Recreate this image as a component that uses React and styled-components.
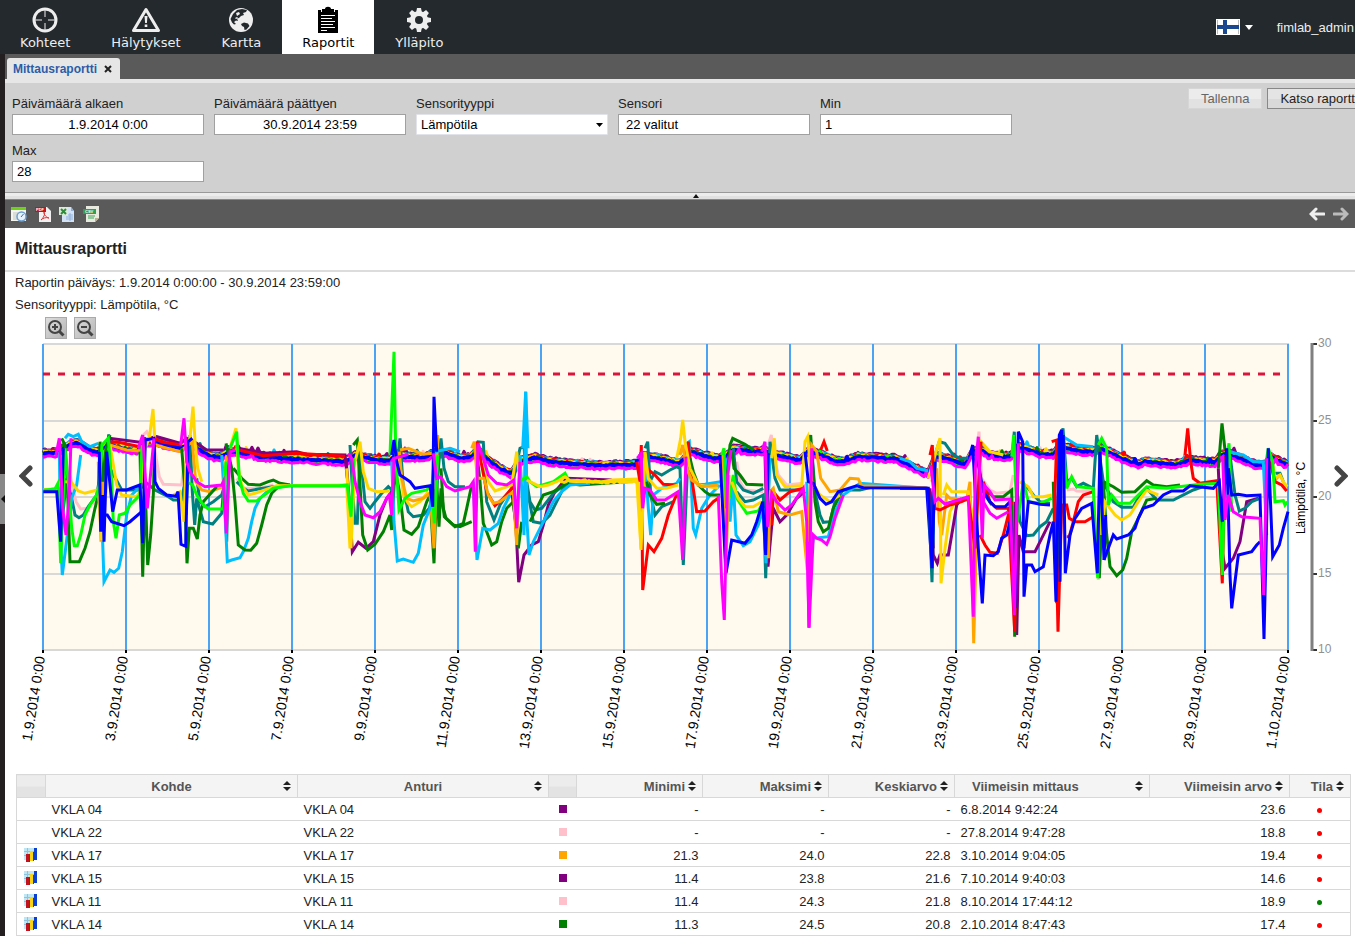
import React, { useState } from 'react';
import styled, { createGlobalStyle } from 'styled-components';

const COLORS = {
  purple: '#800080',
  pink: '#ffc0cb',
  orange: '#ffa500',
  red: '#ff0000',
  teal: '#008080',
  sky: '#00bfff',
  green: '#008000',
  lime: '#00ff00',
  gold: '#ffd700',
  blue: '#0000ff',
  magenta: '#ff00ff',
};

// daytime level shared by all sensors, in plot pixels
const BAND =
  '43,452 58,451 70,443 78,441 90,449 100,451 108,443 115,445 128,448 137,450 145,441 155,440 165,443 180,447 190,441 200,449 208,454 220,456 230,450 240,451 260,455 290,457 345,460 355,454 375,458 390,459 395,453 405,455 425,456 433,452 447,452 460,457 470,456 478,449 490,460 500,467 511,472 520,460 535,456 550,460 570,462 600,464 637,463 641,455 655,456 680,462 690,450 715,457 725,456 733,448 760,450 765,449 775,453 800,459 808,450 820,453 835,459 845,460 858,455 890,457 895,457 910,464 928,473 935,456 940,455 965,463 973,450 980,448 990,454 1010,455 1018,446 1025,447 1040,452 1053,453 1060,445 1080,450 1095,450 1100,447 1110,451 1125,458 1138,463 1145,460 1175,463 1190,459 1215,461 1222,453 1230,453 1255,463 1265,464 1270,455 1288,464';

const BAND_LAYERS = [
  { color: 'purple', shift: -2, width: 3 },
  { color: 'pink', shift: 0, width: 3 },
  { color: 'teal', shift: -1, width: 3 },
  { color: 'sky', shift: -1, width: 3 },
  { color: 'red', shift: 0, width: 4 },
  { color: 'orange', shift: 3, width: 3 },
  { color: 'gold', shift: 0, width: 3 },
  { color: 'green', shift: 1, width: 3 },
  { color: 'lime', shift: 3, width: 3 },
  { color: 'blue', shift: 2, width: 4 },
  { color: 'magenta', shift: 5, width: 3 },
];

const NIGHT = '560,482 575,480 600,482 637,482';

// night-time drops; points are thirds of a pixel from the section's left edge
const SECTIONS = [
  {
    left: 30,
    lines: [
      ['purple', '230,330 240,310 330,322 345,318 380,305 450,325 470,310 500,325 530,345 580,345'],
      ['purple', '625,340 700,355 800,350 830,358 945,360 952,430'],
      ['red', '240,322 260,320 330,335 375,312 400,322 455,330'],
      ['red', '625,345 700,362 800,355 945,364'],
      ['pink', '120,420 138,500 152,522 175,520 200,495 215,440'],
      ['pink', '340,300 350,290 372,330 388,425 400,448 455,450 462,380'],
      ['pink', '620,430 640,460 690,460 730,450'],
      ['teal', '40,466 78,462 90,440 96,560 110,430 125,490 135,540 147,548 160,540 175,515 200,480 207,440 212,560 236,298 240,400 262,440 275,465 330,465 345,440 375,465 415,485 430,495 455,495 462,455 468,540 480,300 487,470 494,570 500,490 520,560 548,567 575,535 582,440 590,620 596,330'],
      ['teal', '500,430 510,500 525,515 550,500 575,480 585,450'],
      ['teal', '620,440 640,460 655,468 685,462 730,455 780,452 955,452'],
      ['sky', '88,350 92,620 97,720 112,600 125,490 140,450 152,360'],
      ['sky', '105,310 115,298 130,305 145,298 155,320 180,335 205,325'],
      ['sky', '210,345 216,560 222,740 240,705 252,712 266,700 277,650 290,540 305,480 330,455'],
      ['sky', '575,360 582,470 592,680 605,675 630,668 640,650 655,610 665,560 675,520 690,490 720,462 780,450'],
      ['orange', '205,380 213,620 222,350 240,330 290,345 330,348 345,420'],
      ['orange', '375,330 450,350 487,320 497,440 515,465 540,470 580,455 590,360'],
      ['green', '95,310 105,330 112,440 120,680 148,680 165,640 180,590 195,520 205,480 210,320 218,440 228,340 240,300'],
      ['green', '330,350 338,725 345,440 353,690 362,600 370,480 374,330'],
      ['green', '455,340 463,440 471,685 478,580 490,580 502,612 510,540 520,500 560,455'],
      ['green', '588,325 605,400 615,500 625,630 645,645 662,646 680,625 695,570 710,510 725,475 745,455'],
      ['green', '610,400 635,430 655,448 690,450 715,440 730,435 750,445 780,450'],
      ['gold', '40,464 80,462 92,440 122,440 145,468 165,475 205,464 215,615 225,500 240,330 260,450 275,480 320,485 330,470 338,400 345,340 358,310 369,222 374,310'],
      ['gold', '430,480 450,470 462,560 470,330 480,310 489,215 495,320 503,400 515,440'],
      ['gold', '600,340 618,280 625,400 635,450 655,480 675,475 690,470 740,452 950,450 960,640'],
      ['lime', '40,466 75,462 84,445 92,685 105,340 115,440 125,580 133,632 142,632 152,600 165,540 180,510 200,480 208,450 216,330 235,310 245,440 250,560 258,610 268,540 285,535 300,510 330,480 336,330'],
      ['lime', '470,440 488,450 500,480 520,510 535,522 580,522 588,380'],
      ['lime', '600,340 620,290 628,430 640,475 655,498 680,498 700,482 730,460 780,452 955,452'],
      ['blue', '40,470 80,470 92,620 100,340'],
      ['blue', '208,350 212,590 218,480 222,620 230,350 248,530 262,465 290,465 330,450 338,625 346,315 372,310 375,440 385,460 410,480 438,484 444,470 453,628 467,634 474,320 487,310'],
      ['blue', '212,540 232,540 245,560 282,572 300,560 335,530'],
      ['magenta', '78,360 88,310 98,520 108,600 118,480 123,310'],
      ['magenta', '325,340 338,300 352,520 372,310'],
      ['magenta', '452,330 462,250 470,380 480,410 500,440 525,455 575,450 580,440 589,595 600,350 617,345'],
    ],
  },
  {
    left: 340,
    lines: [
      ['purple', '18,370 28,500 37,650 55,622 78,640 100,620 120,540 140,490 155,470'],
      ['purple', '515,470 527,560 536,742 552,660 575,630 595,620 610,570 625,510 645,470 680,430 815,435'],
      ['teal', '30,330 36,440 45,565 52,565 60,350 75,500 90,520 105,500 125,475 145,455 155,465 165,440 180,310 190,460 205,530 220,545 250,540 268,520 280,480 290,460 303,310 312,400 325,440 345,455 375,455'],
      ['teal', '410,320 430,322 440,500 462,555 480,510 500,480 515,460 540,340 552,335 560,440 570,500 585,525 605,520 640,475 680,445'],
      ['teal', '565,480 580,560 605,565 630,540 640,520 655,490 670,460 690,448'],
      ['red', '405,350 412,320 440,470 465,512 490,490 520,455'],
      ['green', '40,330 52,315 60,450 68,600 83,645 105,628 130,590 150,540 155,585 165,400 180,480 192,585 215,598 235,575 260,500 270,480 282,685 290,440 297,575 303,460 313,545 340,570 360,575 395,560'],
      ['green', '303,400 310,520 318,550 345,575 370,565 380,520 395,450'],
      ['green', '410,350 420,440 430,565 440,590 455,630 470,620 485,560 500,520 520,500 535,640 545,560'],
      ['green', '570,560 590,520 610,480 640,470 680,445 720,450 860,440 890,435'],
      ['gold', '20,400 33,640 45,380 60,320 70,410 85,460 110,470 150,468'],
      ['gold', '178,370 190,480 205,505 215,515 240,500 265,470'],
      ['gold', '430,370 445,440 465,468 515,450 530,350 540,440'],
      ['orange', '178,350 185,430 200,490 220,498 250,490 270,475 282,640 293,300'],
      ['orange', '180,345 205,340 250,358 278,355'],
      ['orange', '395,340 403,320 412,430 432,430 445,480 460,505 480,500 520,470 530,630 540,370'],
      ['sky', '155,380 162,560 172,678 190,672 220,682 235,655 250,570 270,520 285,350 330,340 360,350'],
      ['sky', '400,440 411,675 428,580 450,585 475,565 490,520 510,480'],
      ['sky', '540,360 552,600 557,170 561,560 567,660 580,620 600,580 620,540 640,500 665,470 690,450 750,445'],
      ['sky', '548,340 557,170 564,340'],
      ['lime', '0,452 22,450 33,545 42,370'],
      ['lime', '150,360 162,50 167,350 172,440 177,525 195,490 215,475 260,465 275,450 283,565 293,360'],
      ['lime', '545,435 560,425 570,440 590,455 640,440 675,415 685,435 780,440 890,435'],
      ['gold', '560,435 600,455 625,450 650,440 675,425 690,438 780,442 815,435 890,432 903,640'],
      ['blue', '155,360 162,315 170,380 180,420 195,430 210,440 225,460 270,452 278,515 282,185 290,350'],
      ['magenta', '25,355 35,370 45,440 60,500 75,540 100,548 120,530 140,490 148,480 155,540 162,370 205,358'],
      ['magenta', '280,355 290,430 302,425 320,455 345,468 390,455 400,440 406,650 414,325 430,370 445,420 470,445 500,450 522,435 530,580 540,380'],
    ],
  },
  {
    left: 630,
    lines: [
      ['purple', '405,360 414,695 430,520 450,560 470,540 500,490 525,470'],
      ['purple', '900,470 910,640'],
      ['pink', '320,380 330,440 345,465 400,470'],
      ['pink', '415,330 424,300 430,360 445,420 470,450 520,445'],
      ['teal', '45,340 53,320 62,480 75,540 95,515 130,500'],
      ['teal', '60,440 75,410 95,420 120,405 140,395 150,400 160,690 175,340'],
      ['teal', '310,340 320,440 340,465 370,475 400,460'],
      ['teal', '320,470 345,500 370,495 400,480 407,730 420,320 435,430 450,465 520,465'],
      ['teal', '545,340 555,470 570,540 580,562 600,560 615,500 640,465 690,465 730,455'],
      ['sky', '45,370 55,520 62,600 70,480 95,460 140,445 150,430'],
      ['sky', '165,330 178,320 190,580 197,600 215,520 240,480 270,450'],
      ['sky', '200,450 225,448 272,440'],
      ['sky', '290,370 300,560 310,440 318,600 340,632 360,620 385,570 400,520 408,685 420,360'],
      ['sky', '530,440 540,695 550,610 595,605 615,530 640,480 690,445 890,460'],
      ['red', '20,380 30,440 34,330 38,765 55,630 72,650 95,610 115,540 135,490 145,470'],
      ['red', '50,400 75,420 100,448 140,450'],
      ['red', '165,370 175,320 185,430 200,530 225,528 250,500 265,490'],
      ['red', '410,440 415,480 425,570 430,470 450,495 480,470 520,460'],
      ['red', '572,345 582,320 592,348'],
      ['green', '50,440 60,480 80,508 105,505'],
      ['green', '180,370 190,410 205,450 225,470 240,480 270,480'],
      ['green', '290,440 300,330 308,310 345,328 370,345'],
      ['green', '305,350 312,400 330,420 350,448 400,450'],
      ['green', '535,340 542,300 555,500 565,560 580,590 595,580 610,520 630,480'],
      ['lime', '275,360 282,340 287,520 300,480 310,420 320,490 350,535 385,528 395,510'],
      ['gold', '25,440 33,645 45,350 55,430 80,460 110,460 145,450'],
      ['gold', '140,370 152,310 158,255 165,320 180,400 205,450 265,460'],
      ['gold', '305,440 325,490 345,515 370,515 395,500'],
      ['gold', '425,370 433,310 440,420 465,455 515,452 525,320 533,305 545,440 570,480 600,500 630,480'],
      ['orange', '150,360 158,330 170,400 185,435 215,455 265,450'],
      ['orange', '275,360 287,710 297,420'],
      ['orange', '410,440 415,670 420,470 430,460 445,530 480,540 515,530 532,705 545,330 560,350 572,430 600,470 630,465 660,430 685,432 695,452 890,458'],
      ['blue', '270,360 280,560 288,715 305,615 345,625 365,600 380,560 398,500 407,660 415,355'],
      ['blue', '525,350 535,440 550,445 570,490 588,508 605,500 625,470 650,462 680,452 700,458 890,460 906,700 915,370'],
      ['magenta', '22,370 34,355 38,520 45,460 60,465 80,495 105,495 145,470 158,675 168,365'],
      ['magenta', '265,480 275,740 283,855 293,420 303,345'],
      ['magenta', '395,350 405,320 413,575 425,475 440,500 465,525 485,510 520,460 530,560 537,878 550,600 560,610 575,615 590,628 600,605 615,550 640,480'],
      ['magenta', '532,620 537,878 545,340'],
    ],
  },
  {
    left: 900,
    lines: [
      ['purple', '90,460 100,660 112,685 120,660 145,660 155,600 170,510 185,490'],
      ['purple', '345,500 350,900 357,600 370,650 405,650 425,610 450,560'],
      ['purple', '955,400 965,640 975,700 1000,670 1020,620 1040,500 1075,490'],
      ['pink', '232,340 237,290 245,430 270,465 290,475 330,470 340,420'],
      ['pink', '500,465 520,462 530,468 580,470 595,735'],
      ['teal', '85,460 96,742 105,360 118,320 135,325 160,360 180,370 205,370'],
      ['teal', '245,440 255,480 275,510'],
      ['teal', '338,350 343,290 348,440 360,560 380,602 400,600 420,575 440,560 460,520'],
      ['teal', '362,440 385,460 400,480 420,500 450,505'],
      ['teal', '480,320 489,280 500,440 515,430 530,455 550,445 580,460 590,300 610,440 640,500 665,517 700,517 720,480 740,460 770,495 820,495 840,485 880,465 910,455'],
      ['teal', '990,360 1005,480 1018,528 1035,520 1055,500 1080,490'],
      ['teal', '1120,415 1140,415 1150,440'],
      ['sky', '0,370 30,380 50,400 85,408'],
      ['sky', '490,305 530,330 580,335'],
      ['sky', '985,350 1030,360 1060,380 1090,380 1100,600'],
      ['green', '245,450 280,485 310,485 335,465 344,905 352,400'],
      ['green', '460,440 470,805 480,440 490,340'],
      ['green', '600,340 598,730 610,440 620,600 630,695 650,722 668,705 680,670 695,590 715,550 740,495 770,490'],
      ['green', '610,440 640,455 665,472 705,470 740,437 760,450 800,455 840,450'],
      ['green', '955,400 966,265 975,345'],
      ['orange', '95,440 110,400 118,560 125,600 140,480 150,490 200,495 210,440 221,925 235,400'],
      ['orange', '1120,440 1140,420'],
      ['gold', '85,430 108,350 120,310 123,745 135,640 150,530 165,500'],
      ['gold', '130,480 140,450 155,470 205,470 218,560 243,320 270,350 310,360'],
      ['gold', '360,440 385,455 400,485 430,485 455,480'],
      ['gold', '600,460 605,600 615,500 630,520 645,540 665,555 690,540 715,500 740,465 775,480'],
      ['gold', '1115,370 1125,430 1140,420 1150,440 1162,455'],
      ['red', '90,360 97,330 105,520 120,525 150,510 185,500 205,490 225,640 243,320'],
      ['red', '240,600 255,630 270,652 292,655 310,600 325,540 335,500'],
      ['red', '250,440 270,500 290,520 325,520 344,890 355,330'],
      ['red', '455,320 470,315 465,470 474,890 485,510 500,510 508,550 525,560 555,560 580,545'],
      ['red', '500,605 508,605 520,560 535,500 550,480 580,470'],
      ['red', '855,360 863,280 872,380 880,430 900,445 950,437 967,745 975,360'],
      ['red', '1110,380 1125,440 1145,450 1160,468'],
      ['lime', '335,365 341,300 352,560 370,440 385,500 420,505 455,490'],
      ['lime', '490,340 500,460 515,425 530,455 580,460 593,730 600,400'],
      ['lime', '595,330 605,310 620,340 625,510 635,480 655,505 690,505 715,480 740,455 800,460 900,448 955,445 967,720 975,400 987,325 995,530'],
      ['lime', '1100,370 1105,340 1118,380 1125,500 1150,497 1155,510 1162,500'],
      ['blue', '0,460 85,460 96,700 105,380'],
      ['blue', '210,360 218,330 235,640 247,805 255,660 280,662 295,650 305,610 320,600 330,560'],
      ['blue', '230,360 250,470 270,500 285,515 315,515 330,500 345,820 355,290 368,320 372,785 380,690 395,690 405,710 430,695 450,600 460,560 468,800 478,300 485,285 480,740'],
      ['blue', '372,640 385,500 420,508 450,510'],
      ['blue', '490,300 496,715 510,600 525,550 545,520 575,505 592,715 600,350 612,675 617,540'],
      ['blue', '612,675 625,640 640,600 650,612 685,600 705,580 715,550 730,520 760,510 790,480 815,468 850,468 870,452 940,460 958,440 967,560 980,340 990,720 995,820 1015,660 1055,650 1070,630 1080,620'],
      ['blue', '985,400 995,480 1015,478 1040,482 1080,480 1092,912 1105,340 1118,665 1138,630 1150,580 1164,530'],
      ['magenta', '92,390 105,500 115,490 135,507 205,485 220,845 226,400 235,305 247,610 252,450 270,470 285,495 330,492 343,840 355,325'],
      ['magenta', '250,500 270,535 290,550 325,530'],
      ['magenta', '960,370 968,365 975,555 985,480 1000,530 1025,545 1080,550 1091,780 1100,370'],
    ],
  },
];

const DATES = [
  '1.9.2014 0:00', '3.9.2014 0:00', '5.9.2014 0:00', '7.9.2014 0:00',
  '9.9.2014 0:00', '11.9.2014 0:00', '13.9.2014 0:00', '15.9.2014 0:00',
  '17.9.2014 0:00', '19.9.2014 0:00', '21.9.2014 0:00', '23.9.2014 0:00',
  '25.9.2014 0:00', '27.9.2014 0:00', '29.9.2014 0:00', '1.10.2014 0:00',
];

const LEVELS = [
  { value: 30, y: 344 },
  { value: 25, y: 421 },
  { value: 20, y: 497 },
  { value: 15, y: 574 },
  { value: 10, y: 650 },
];

const SENSORS = [
  { id: 1, chart: false, name: 'VKLA 04', color: 'purple', min: '-', max: '-', avg: '-', date: '6.8.2014 9:42:24', last: '23.6', ok: false },
  { id: 2, chart: false, name: 'VKLA 22', color: 'pink', min: '-', max: '-', avg: '-', date: '27.8.2014 9:47:28', last: '18.8', ok: false },
  { id: 3, chart: true, name: 'VKLA 17', color: 'orange', min: '21.3', max: '24.0', avg: '22.8', date: '3.10.2014 9:04:05', last: '19.4', ok: false },
  { id: 4, chart: true, name: 'VKLA 15', color: 'purple', min: '11.4', max: '23.8', avg: '21.6', date: '7.10.2014 9:40:03', last: '14.6', ok: false },
  { id: 5, chart: true, name: 'VKLA 11', color: 'pink', min: '11.4', max: '24.3', avg: '21.8', date: '8.10.2014 17:44:12', last: '18.9', ok: true },
  { id: 6, chart: true, name: 'VKLA 14', color: 'green', min: '11.3', max: '24.5', avg: '20.8', date: '2.10.2014 8:47:43', last: '17.4', ok: false },
];

const COLUMNS = [
  { key: 'chart', width: 29 },
  { key: 'kohde', width: 252, title: 'Kohde', align: 'center' },
  { key: 'anturi', width: 251, title: 'Anturi', align: 'center' },
  { key: 'color', width: 28 },
  { key: 'min', width: 126, title: 'Minimi', align: 'right' },
  { key: 'max', width: 126, title: 'Maksimi', align: 'right' },
  { key: 'avg', width: 126, title: 'Keskiarvo', align: 'right' },
  { key: 'date', width: 195, title: 'Viimeisin mittaus', align: 'left' },
  { key: 'last', width: 140, title: 'Viimeisin arvo', align: 'right' },
  { key: 'state', width: 61, title: 'Tila', align: 'right' },
];

const parse = (text) => text.split(' ').map((pair) => pair.split(',').map(Number));

// measured values are never smooth, so walk the line and shake it a little
const noisy = (text, shift, seed) => {
  const points = parse(text);
  let state = seed * 7919 + 13;
  const random = () => {
    state = (state * 16807) % 2147483647;
    return state / 2147483647 - 0.5;
  };
  const result = [];
  for (let i = 0; i < points.length - 1; i++) {
    const [x1, y1] = points[i];
    const [x2, y2] = points[i + 1];
    for (let x = x1; x < x2; x += 2) {
      const y = y1 + ((y2 - y1) * (x - x1)) / (x2 - x1);
      const spike = random() > 0.49 ? 4 : 0;
      result.push(`${x},${(y + shift + random() * 2 - spike).toFixed(1)}`);
    }
  }
  result.push(points[points.length - 1].join(','));
  return result.join(' ');
};

const toPlot = (text, left) =>
  parse(text)
    .map(([x, y]) => `${(left + x / 3).toFixed(1)},${(335 + y / 3).toFixed(1)}`)
    .join(' ');

function TargetIcon() {
  return (
    <svg width="26" height="26" viewBox="0 0 26 26" fill="none" stroke="#eee">
      <circle cx="13" cy="13" r="11" strokeWidth="3" />
      <path d="M13 2v8M13 16v8M2 13h8M16 13h8" strokeWidth="1" />
    </svg>
  );
}

function WarningIcon() {
  return (
    <svg width="30" height="26" viewBox="0 0 30 26">
      <path d="M15 2.500 27.500 23.500H2.500Z" fill="none" stroke="#eee" strokeWidth="3" strokeLinejoin="round" />
      <path d="M13.500 9h3l-.6 7h-1.800zM13.700 17.500h2.600V20h-2.600z" fill="#eee" />
    </svg>
  );
}

function GlobeIcon() {
  return (
    <svg width="26" height="26" viewBox="0 0 26 26">
      <circle cx="13" cy="13" r="12" fill="#eee" />
      <path
        d="M9 3l5-1 5 1-1 2-3 1 1 2-3 1-2 2-2 .5 1 2.500-2-.5-2 1.500 2 2-2 .5-2-2-1.500-3.500L5 7z"
        fill="#24292d"
      />
      <path d="M8 6l3-1 1 2-3 2zM7 11l2-1 1 1-2 1z" fill="#eee" />
      <path d="M13 17l3-1.500 4 1 1.500 2.500-3 3.500-2 .5-.5-3-2-1z" fill="#24292d" />
    </svg>
  );
}

function ClipboardIcon() {
  return (
    <svg width="22" height="28" viewBox="0 0 22 28">
      <path d="M1 4h3v2h14V4h3v23H1z" fill="#000" />
      <path d="M5 6V3h3c0-3 6-3 6 0h3v3z" fill="#000" />
      <path d="M4 9h14M4 12h11M4 15h14M4 18h12M4 21h14M4 24h6" stroke="#fff" strokeWidth="1" transform="translate(0 .5)" />
    </svg>
  );
}

function GearIcon() {
  const teeth = [0, 45, 90, 135, 180, 225, 270, 315];
  return (
    <svg width="26" height="26" viewBox="-13 -13 26 26">
      {teeth.map((angle) => (
        <path key={angle} d="M-3-7-2-12H2L3-7z" fill="#eee" transform={`rotate(${angle})`} />
      ))}
      <circle r="6.500" fill="none" stroke="#eee" strokeWidth="5" />
    </svg>
  );
}

function FlagIcon() {
  return (
    <svg width="24" height="16" viewBox="0 0 24 16">
      <path d="M0 0h24v16H0z" fill="#fff" />
      <path d="M1.500 1v14M22.500 1v14" stroke="#bbb" />
      <path d="M1 6h22v4H1zM7 1h4v14H7z" fill="#1a478f" />
    </svg>
  );
}

function ScheduleIcon() {
  return (
    <svg width="16" height="16" viewBox="0 0 16 16">
      <path d="M0 1h15v14H0z" fill="#f4f5ef" />
      <path d="M0 1h15v3H0z" fill="#6fd018" />
      <path d="M2 7h5M2 9h4M2 11h4M2 13h5" stroke="#c3c6bd" />
      <circle cx="10.500" cy="10.500" r="4.500" fill="#e8f3fc" stroke="#6d9fd0" strokeWidth="1.500" />
      <path d="M10 11l2.500-3" stroke="#3b6ea5" fill="none" />
    </svg>
  );
}

function PdfIcon() {
  return (
    <svg width="16" height="16" viewBox="0 0 16 16">
      <path d="M4 1h8l4 4v11H4z" fill="#f1f1f1" />
      <path d="M6 14c4-4 4-7 3-8-1 2 3 6 5 6-3-1-6 0-8 2z" fill="none" stroke="#d33" />
      <path d="M0 1h11v5H0z" fill="#c8101c" />
      <text x="1" y="5" fontSize="4" fontWeight="bold" fill="#fff">PDF</text>
    </svg>
  );
}

function ExcelIcon() {
  return (
    <svg width="16" height="16" viewBox="0 0 16 16">
      <path d="M3 1h9l3 4v11H3z" fill="#d3e3f5" />
      <path d="M12 1v4h3z" fill="#8fb1d9" />
      <path d="M11 7v8M7 11h7M7 13h7M9 9h5" stroke="#8fb1d9" />
      <path d="M0 1h9v8H0z" fill="#d9ecd6" />
      <path d="M2 3l5 5M7 3L2 8" stroke="#2f8a3b" strokeWidth="2" />
    </svg>
  );
}

function CsvIcon() {
  return (
    <svg width="16" height="16" viewBox="0 0 16 16">
      <path d="M3 0h13v12l-4 4H3z" fill="#e9eadf" />
      <path d="M16 12h-4v4z" fill="#b9b08f" />
      <path d="M5 10h7M5 12h6" stroke="#3ba55a" />
      <path d="M0 3h13v5H0z" fill="#2f9e4f" />
      <text x="2" y="7" fontSize="4" fontWeight="bold" fill="#fff">CSV</text>
    </svg>
  );
}

function BarsIcon() {
  return (
    <svg width="14" height="14" viewBox="0 0 14 14">
      <path d="M0 0h13v12H0z" fill="#bfe6f5" />
      <path d="M0 3.500h13M0 7.500h13M3.500 0v12" stroke="#8fc3dc" />
      <path d="M2 6h4v8H2z" fill="#c1121f" />
      <path d="M6 3h3v10H6z" fill="#f7d417" />
      <path d="M10 0h3v12h-3z" fill="#0a3fd1" />
      <path d="M5 7h1v7H5zM9 4h1v9H9z" fill="#541" />
    </svg>
  );
}

function SortIcon() {
  return (
    <svg width="8" height="10" viewBox="0 0 8 10">
      <path d="M4 0l4 4H0zM4 10l4-4H0z" fill="#222" />
    </svg>
  );
}

function MagnifierIcon({ plus }) {
  return (
    <svg width="18" height="18" viewBox="0 0 18 18" fill="none" stroke="#444">
      <circle cx="8" cy="8" r="6" strokeWidth="2" />
      <path d="M12.500 12.500l4 4" strokeWidth="3" />
      <path d={plus ? 'M5 8h6M8 5v6' : 'M5 8h6'} strokeWidth="2" />
    </svg>
  );
}

function ArrowIcon({ right, color }) {
  return (
    <svg width="16" height="14" viewBox="0 0 16 14">
      <path
        d="M7 2 2 7l5 5M3 7h12"
        fill="none"
        stroke={color}
        strokeWidth="3"
        strokeLinecap="round"
        transform={right ? 'translate(16 0) scale(-1 1)' : undefined}
      />
    </svg>
  );
}

function ChevronIcon({ right }) {
  return (
    <svg width="14" height="22" viewBox="0 0 14 22">
      <path
        d={right ? 'M3 3l8 8-8 8' : 'M11 3l-8 8 8 8'}
        fill="none"
        stroke="#444"
        strokeWidth="5"
        strokeLinecap="round"
      />
    </svg>
  );
}

const NAV = [
  { title: 'Kohteet', icon: <TargetIcon /> },
  { title: 'Hälytykset', icon: <WarningIcon /> },
  { title: 'Kartta', icon: <GlobeIcon /> },
  { title: 'Raportit', icon: <ClipboardIcon />, active: true },
  { title: 'Ylläpito', icon: <GearIcon /> },
];

const EXPORTS = [
  { title: 'Ajastus', icon: <ScheduleIcon /> },
  { title: 'PDF', icon: <PdfIcon /> },
  { title: 'Excel', icon: <ExcelIcon /> },
  { title: 'CSV', icon: <CsvIcon /> },
];

function Chart() {
  return (
    <Plot viewBox="5 340 1350 430" role="img" aria-label="Lämpötila, °C">
      <rect x="43" y="344" width="1245" height="306" fill="#fff9ee" />
      {LEVELS.map(({ value, y }) => (
        <g key={value}>
          <path d={`M43 ${y}H1289`} stroke="#d8d8d8" strokeWidth="2" />
          <path d={`M1312 ${y}h5`} stroke="#333" strokeWidth="2" />
          <AxisValue x="1318" y={y + 3}>
            {value}
          </AxisValue>
        </g>
      ))}
      {DATES.map((date, i) => (
        <path key={date} d={`M${43 + i * 83} 344V650`} stroke="#4ba3f5" strokeWidth="2" />
      ))}
      <path d="M43 374H1288" stroke="#dc143c" strokeWidth="3" strokeDasharray="7 8" />
      <g fill="none" strokeWidth="3">
        {BAND_LAYERS.map(({ color, shift, width }, i) => (
          <polyline
            key={color}
            points={noisy(BAND, shift, i + 1)}
            stroke={COLORS[color]}
            strokeWidth={width}
            strokeLinejoin="round"
          />
        ))}
        {SECTIONS.map((section) =>
          section.lines.map(([color, line]) => (
            <polyline key={section.left + line} points={toPlot(line, section.left)} stroke={COLORS[color]} />
          ))
        )}
        <polyline points={noisy(NIGHT, 0, 30)} stroke={COLORS.gold} />
      </g>
      {DATES.map((date, i) => (
        <g key={date}>
          <path d={`M${43 + i * 83} 650v3`} stroke="#000" strokeWidth="2" />
          <AxisDate transform={`translate(${45 + i * 83} 657) rotate(-81)`}>{date}</AxisDate>
        </g>
      ))}
      <path d="M1312 343V651" stroke="#808080" strokeWidth="3" />
      <AxisTitle transform="translate(1305 498) rotate(-90)">Lämpötila, °C</AxisTitle>
    </Plot>
  );
}

function App() {
  const [from, setFrom] = useState('1.9.2014 0:00');
  const [to, setTo] = useState('30.9.2014 23:59');
  const [type, setType] = useState('Lämpötila');
  const [min, setMin] = useState('1');
  const [max, setMax] = useState('28');

  return (
    <Page>
      <GlobalStyle />
      <Header>
        <Nav>
          {NAV.map((item) => (
            <NavLink key={item.title} href="#" $active={item.active}>
              <NavIcon>{item.icon}</NavIcon>
              {item.title}
            </NavLink>
          ))}
        </Nav>
        <UserArea>
          <LanguageButton type="button" aria-label="Kieli">
            <FlagIcon />
            <svg width="8" height="5" viewBox="0 0 8 5">
              <path d="M0 0h8L4 5z" fill="#fff" />
            </svg>
          </LanguageButton>
          <span>fimlab_admin</span>
        </UserArea>
      </Header>

      <Body>
        <Sidebar>
          <SidebarHandle type="button" aria-label="Avaa sivupalkki">
            <svg width="5" height="8" viewBox="0 0 5 8">
              <path d="M5 0v8L1 4z" fill="#111" />
            </svg>
          </SidebarHandle>
        </Sidebar>

        <Main>
          <TabBar>
            <Tab>
              <a href="#">Mittausraportti</a>
              <button type="button" aria-label="Sulje">
                <svg width="8" height="8" viewBox="0 0 8 8">
                  <path d="M1 1l6 6M7 1L1 7" stroke="#222" strokeWidth="2" />
                </svg>
              </button>
            </Tab>
          </TabBar>

          <FilterPanel>
            <Fields>
              <Field>
                <label htmlFor="from">Päivämäärä alkaen</label>
                <Input id="from" $center value={from} onChange={(e) => setFrom(e.target.value)} />
              </Field>
              <Field>
                <label htmlFor="to">Päivämäärä päättyen</label>
                <Input id="to" $center value={to} onChange={(e) => setTo(e.target.value)} />
              </Field>
              <Field>
                <label htmlFor="type">Sensorityyppi</label>
                <SelectBox>
                  <select id="type" value={type} onChange={(e) => setType(e.target.value)}>
                    <option>Lämpötila</option>
                  </select>
                  <svg width="7" height="4" viewBox="0 0 7 4">
                    <path d="M0 0h7L3.500 4z" fill="#000" />
                  </svg>
                </SelectBox>
              </Field>
              <Field>
                <label htmlFor="sensor">Sensori</label>
                <Input id="sensor" $wide readOnly value="22 valitut" />
              </Field>
              <Field>
                <label htmlFor="min">Min</label>
                <Input id="min" value={min} onChange={(e) => setMin(e.target.value)} />
              </Field>
              <Field>
                <label htmlFor="max">Max</label>
                <Input id="max" value={max} onChange={(e) => setMax(e.target.value)} />
              </Field>
            </Fields>
            <Actions>
              <Button type="button" disabled>
                Tallenna
              </Button>
              <Button type="button">Katso raportti</Button>
            </Actions>
          </FilterPanel>

          <Collapse type="button" aria-label="Piilota suodattimet">
            <svg width="6" height="4" viewBox="0 0 6 4">
              <path d="M3 0l3 4H0z" fill="#111" />
            </svg>
          </Collapse>

          <Toolbar>
            <ToolGroup>
              {EXPORTS.map((item) => (
                <IconButton key={item.title} type="button" aria-label={item.title}>
                  {item.icon}
                </IconButton>
              ))}
            </ToolGroup>
            <ToolGroup>
              <IconButton type="button" aria-label="Edellinen">
                <ArrowIcon color="#eee" />
              </IconButton>
              <IconButton type="button" aria-label="Seuraava">
                <ArrowIcon right color="#bbb" />
              </IconButton>
            </ToolGroup>
          </Toolbar>

          <Title>Mittausraportti</Title>
          <Summary>
            <p>Raportin päiväys: 1.9.2014 0:00:00 - 30.9.2014 23:59:00</p>
            <p>Sensorityyppi: Lämpötila, °C</p>
          </Summary>

          <ZoomBar>
            <ZoomButton type="button" aria-label="Suurenna">
              <MagnifierIcon plus />
            </ZoomButton>
            <ZoomButton type="button" aria-label="Pienennä">
              <MagnifierIcon />
            </ZoomButton>
          </ZoomBar>

          <ChartArea>
            <Chart />
            <Pager type="button" aria-label="Aiemmat">
              <ChevronIcon />
            </Pager>
            <Pager type="button" aria-label="Myöhemmät" $right>
              <ChevronIcon right />
            </Pager>
          </ChartArea>

          <TableArea>
            <Table>
              <colgroup>
                {COLUMNS.map((column) => (
                  <Col key={column.key} $width={column.width} />
                ))}
              </colgroup>
              <thead>
                <tr>
                  {COLUMNS.map((column) => (
                    <HeadCell key={column.key} $empty={!column.title}>
                      {column.title && (
                        <SortButton type="button" $align={column.align}>
                          <span>{column.title}</span>
                          <SortIcon />
                        </SortButton>
                      )}
                    </HeadCell>
                  ))}
                </tr>
              </thead>
              <tbody>
                {SENSORS.map((sensor) => (
                  <tr key={sensor.id}>
                    <Cell $align="center">{sensor.chart && <BarsIcon />}</Cell>
                    <Cell>{sensor.name}</Cell>
                    <Cell>{sensor.name}</Cell>
                    <Cell $align="center">
                      <Swatch $color={COLORS[sensor.color]} />
                    </Cell>
                    <Cell $align="right">{sensor.min}</Cell>
                    <Cell $align="right">{sensor.max}</Cell>
                    <Cell $align="right">{sensor.avg}</Cell>
                    <Cell>{sensor.date}</Cell>
                    <Cell $align="right">{sensor.last}</Cell>
                    <Cell $align="center">
                      <Dot $ok={sensor.ok} />
                    </Cell>
                  </tr>
                ))}
              </tbody>
            </Table>
          </TableArea>
        </Main>
      </Body>
    </Page>
  );
}

export default App;

const GlobalStyle = createGlobalStyle`
  * {
    box-sizing: border-box;
  }

  body {
    margin: 0;
    overflow: hidden;
    font-family: "Liberation Sans", Arial, sans-serif;
    font-size: 13px;
    color: #222;
    background: #fff;
  }

  button, input, select {
    font: inherit;
    color: inherit;
  }

  button {
    padding: 0;
    border: 0;
    background: none;
  }

  svg {
    display: block;
  }
`;

const Page = styled.div`
  display: flex;
  flex-direction: column;
  height: 100vh;
  overflow: hidden;
`;

const Header = styled.header`
  display: flex;
  flex: none;
  justify-content: space-between;
  height: 54px;
  color: #eee;
  background: #24292d;
`;

const Nav = styled.nav`
  display: flex;
  gap: 1px;
`;

const NavLink = styled.a`
  display: flex;
  flex-direction: column;
  align-items: center;
  padding: 4px 20px 0 20px;
  font-family: "DejaVu Sans", Verdana, sans-serif;
  line-height: 16px;
  color: ${({ $active }) => ($active ? '#000' : '#eee')};
  background: ${({ $active }) => ($active ? '#fff' : 'none')};
  text-decoration: none;
`;

const NavIcon = styled.span`
  display: flex;
  align-items: center;
  height: 31px;
`;

const UserArea = styled.div`
  display: flex;
  align-items: center;
  gap: 24px;
  padding-right: 1px;
`;

const LanguageButton = styled.button`
  display: flex;
  align-items: center;
  gap: 5px;
`;

const Body = styled.div`
  display: flex;
  flex: 1;
  min-height: 0;
`;

const Sidebar = styled.aside`
  display: flex;
  flex: none;
  align-items: center;
  width: 5px;
  padding-top: 8px;
  background: #231f20;
`;

const SidebarHandle = styled.button`
  display: flex;
  align-items: center;
  width: 5px;
  height: 50px;
  background: #888;
`;

const Main = styled.main`
  flex: 1;
  min-width: 0;
`;

const TabBar = styled.div`
  display: flex;
  align-items: flex-end;
  height: 25px;
  padding-left: 2px;
  background: #5a5a5a;
`;

const Tab = styled.div`
  display: flex;
  align-items: center;
  gap: 7px;
  height: 21px;
  padding: 0 8px 0 6px;
  border-radius: 3px 3px 0 0;
  background: #e6e6e6;

  a {
    font-size: 12px;
    font-weight: bold;
    color: #2b5da8;
    text-decoration: none;
  }
`;

const FilterPanel = styled.form`
  display: flex;
  justify-content: space-between;
  padding: 5px 0 10px 7px;
  border-top: 4px solid #e6e6e6;
  border-bottom: 1px solid #999;
  background: #d0d0d0;
  overflow: hidden;
`;

const Fields = styled.div`
  display: flex;
  flex-wrap: wrap;
  gap: 6px 10px;
  padding-top: 6px;
`;

const Field = styled.div`
  display: flex;
  flex-direction: column;
  width: 192px;

  label {
    line-height: 20px;
  }
`;

const Input = styled.input`
  width: 100%;
  height: 21px;
  padding: 0 ${({ $wide }) => ($wide ? '7px' : '4px')};
  border: 1px solid #a0a0a0;
  background: #fff;
  color: #000;
  text-align: ${({ $center }) => ($center ? 'center' : 'left')};
`;

const SelectBox = styled.div`
  position: relative;

  select {
    width: 100%;
    height: 21px;
    padding: 0 4px;
    border: 1px solid #e2e3ea;
    border-radius: 1px;
    background: #fff;
    color: #000;
    appearance: none;
  }

  svg {
    position: absolute;
    top: 9px;
    right: 5px;
    pointer-events: none;
  }
`;

const Actions = styled.div`
  display: flex;
  flex: none;
  align-items: flex-start;
  gap: 5px;
  width: 167px;
`;

const Button = styled.button`
  flex: none;
  height: 21px;
  padding: 0 12px;
  border: 1px solid #888;
  background: linear-gradient(#e4e4e4 50%, #d9d9d9 50%);
  white-space: nowrap;

  &:disabled {
    border-color: #d6d6d6;
    background: linear-gradient(#ececec 50%, #e2e2e2 50%);
    color: #666;
  }
`;

const Collapse = styled.button`
  display: flex;
  align-items: center;
  justify-content: center;
  width: 100%;
  height: 7px;
  padding-left: 32px;
  border-bottom: 1px solid #888;
  background: linear-gradient(#ececec 50%, #e0e0e0 50%);
`;

const Toolbar = styled.div`
  display: flex;
  align-items: center;
  justify-content: space-between;
  height: 28px;
  padding: 0 6px;
  background: #5a5a5a;
`;

const ToolGroup = styled.div`
  display: flex;
  gap: 8px;
`;

const IconButton = styled.button`
  display: flex;
  align-items: center;
`;

const Title = styled.h1`
  height: 44px;
  margin: 0;
  padding-left: 10px;
  border-bottom: 2px solid #dcdcdc;
  font-size: 16px;
  line-height: 42px;
`;

const Summary = styled.div`
  padding-left: 10px;
  line-height: 22px;

  p {
    margin: 0;
  }
`;

const ZoomBar = styled.div`
  display: flex;
  gap: 7px;
  padding: 1px 0 1px 40px;
`;

const ZoomButton = styled.button`
  display: flex;
  align-items: center;
  justify-content: center;
  width: 22px;
  height: 22px;
  border: 1px solid #aaa;
  background: linear-gradient(135deg, #ddd, #b4b4b4);
`;

const ChartArea = styled.div`
  position: relative;
`;

const Plot = styled.svg`
  width: 100%;
  height: auto;
  overflow: visible;
`;

const AxisValue = styled.text`
  font-size: 12px;
  fill: #909090;
`;

const AxisDate = styled.text`
  font-size: 14px;
  fill: #000;
  text-anchor: end;
`;

const AxisTitle = styled.text`
  font-size: 12px;
  fill: #000;
  text-anchor: middle;
`;

const Pager = styled.button`
  position: absolute;
  top: 29%;
  ${({ $right }) => ($right ? 'right: 7px' : 'left: 14px')};
`;

const TableArea = styled.div`
  padding: 4px 5px 0 11px;
`;

const Table = styled.table`
  width: 100%;
  table-layout: fixed;
  border-collapse: collapse;

  tr {
    height: 23px;
    border: 1px solid #d8d8d8;
  }
`;

const Col = styled.col`
  width: ${({ $width }) => $width}px;
`;

const HeadCell = styled.th`
  padding: 0;
  border: 1px solid #d8d8d8;
  background: ${({ $empty }) => ($empty ? 'linear-gradient(#ececec 50%, #e3e3e3 50%)' : '#f4f4f4')};
`;

const JUSTIFY = { left: 'space-between', center: 'space-between', right: 'flex-end' };

const SortButton = styled.button`
  display: flex;
  align-items: center;
  justify-content: ${({ $align }) => JUSTIFY[$align]};
  gap: 3px;
  width: 100%;
  height: 22px;
  padding: 0 6px 0 17px;
  font-weight: bold;
  color: #555;

  span {
    flex: ${({ $align }) => ($align === 'right' ? 'none' : '1')};
    text-align: ${({ $align }) => $align};
  }
`;

const Cell = styled.td`
  padding: ${({ $align }) => ($align === 'center' ? '0' : '0 4px 0 6px')};
  text-align: ${({ $align }) => $align || 'left'};
  white-space: nowrap;

  svg {
    margin: 0 auto;
  }
`;

const Swatch = styled.span`
  display: block;
  width: 8px;
  height: 8px;
  margin: 0 auto;
  background: ${({ $color }) => $color};
`;

const Dot = styled.span`
  display: block;
  width: 5px;
  height: 5px;
  margin: 2px auto 0 auto;
  border-radius: 50%;
  background: ${({ $ok }) => ($ok ? '#008000' : '#ff0000')};
`;
